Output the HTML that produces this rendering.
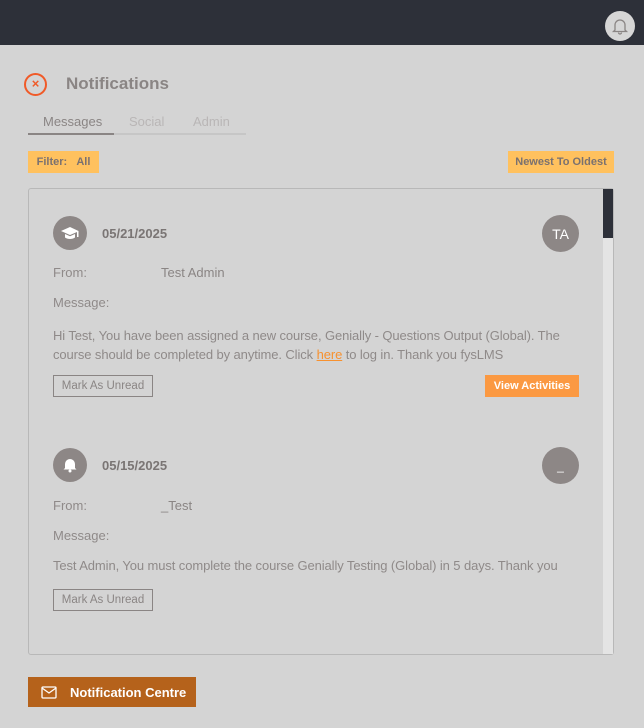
<!DOCTYPE html>
<html><head><meta charset="utf-8"><style>
*{margin:0;padding:0;box-sizing:border-box}
body{width:644px;height:728px;background:#d4d4d4;font-family:"Liberation Sans",sans-serif;position:relative;overflow:hidden;color:#8a8584}
.a{position:absolute;white-space:nowrap}
.hdr{left:0;top:0;width:644px;height:45px;background:#2d3039}
.circ{border-radius:50%;background:#8d8786;display:flex;align-items:center;justify-content:center;color:#fff}
.lbl{font-size:13px;color:#8f8a89}
.btn{border:1px solid #8a8584;font-size:11.5px;color:#8a8584;display:flex;align-items:center;justify-content:center}
.y{background:#ffc15e;font-size:11px;font-weight:bold;color:#7a7170;display:flex;align-items:center;justify-content:center}
</style></head><body>
<div class="a hdr"></div>
<div class="a circ" style="left:605px;top:11px;width:30px;height:30px;background:#d6d6d6">
<svg width="18" height="18" viewBox="0 0 18 18" fill="none" stroke="#8a8584" stroke-width="1.3"><path d="M4 13V8a5 5 0 0 1 10 0v5l1.5 1.5h-13z"/><path d="M7.5 15.5a1.5 1.5 0 0 0 3 0"/></svg></div>
<div class="a" style="left:24px;top:73px;width:23px;height:23px;border:2px solid #f05a28;border-radius:50%;color:#f05a28;font-size:13px;font-weight:bold;text-align:center;line-height:18px">×</div>
<div class="a" style="left:66px;top:74px;font-size:17px;font-weight:bold;color:#8a8584">Notifications</div>
<div class="a" style="left:43px;top:114px;font-size:13px;color:#8a8584">Messages</div>
<div class="a" style="left:129px;top:114px;font-size:13px;color:#b9b6b6">Social</div>
<div class="a" style="left:193px;top:114px;font-size:13px;color:#b9b6b6">Admin</div>
<div class="a" style="left:28px;top:133px;width:218px;height:2px;background:#c6c6c6"></div>
<div class="a" style="left:28px;top:133px;width:86px;height:2px;background:#8a8584"></div>
<div class="a y" style="left:28px;top:151px;width:71px;height:22px">Filter:&nbsp;&nbsp;&nbsp;All</div>
<div class="a y" style="left:508px;top:151px;width:106px;height:22px">Newest To Oldest</div>
<div class="a" style="left:28px;top:188px;width:586px;height:467px;border:1px solid #b8b8b8;border-radius:3px"></div>
<div class="a" style="left:603px;top:189px;width:10px;height:465px;background:#e4e4e4"></div>
<div class="a" style="left:603px;top:189px;width:10px;height:49px;background:#2d3039"></div>

<div class="a circ" style="left:53px;top:216px;width:34px;height:34px"><svg width="18" height="16" viewBox="0 0 18 16" fill="#fff"><path d="M9 2L0 6l9 4 7-3v5h1.5V6z"/><path d="M4 9v3.5c2.5 2 7.5 2 10 0V9l-5 2.2z"/></svg></div>
<div class="a" style="left:102px;top:226px;font-size:13px;font-weight:bold;color:#7a7574">05/21/2025</div>
<div class="a circ" style="left:542px;top:215px;width:37px;height:37px;font-size:14px">TA</div>
<div class="a lbl" style="left:53px;top:265px">From:</div>
<div class="a lbl" style="left:161px;top:265px;color:#8a8584">Test Admin</div>
<div class="a lbl" style="left:53px;top:295px">Message:</div>
<div class="a lbl" style="left:53px;top:326px;line-height:19px;letter-spacing:-0.1px">Hi Test, You have been assigned a new course, Genially - Questions Output (Global). The<br>course should be completed by anytime. Click <span style="color:#f7912f;text-decoration:underline">here</span> to log in. Thank you fysLMS</div>
<div class="a btn" style="left:53px;top:375px;width:100px;height:22px">Mark As Unread</div>
<div class="a" style="left:485px;top:375px;width:94px;height:22px;background:#fb9942;color:#fff;font-size:11px;font-weight:bold;display:flex;align-items:center;justify-content:center">View Activities</div>

<div class="a circ" style="left:53px;top:448px;width:34px;height:34px"><svg width="14" height="16" viewBox="0 0 14 16" fill="#fff"><path d="M2 11V7a5 5 0 0 1 10 0v4l1.5 1.5h-13z"/><circle cx="7" cy="14" r="1.5"/></svg></div>
<div class="a" style="left:102px;top:458px;font-size:13px;font-weight:bold;color:#7a7574">05/15/2025</div>
<div class="a circ" style="left:542px;top:447px;width:37px;height:37px;font-size:12px">_</div>
<div class="a lbl" style="left:53px;top:498px">From:</div>
<div class="a lbl" style="left:161px;top:498px;color:#8a8584">_Test</div>
<div class="a lbl" style="left:53px;top:528px">Message:</div>
<div class="a lbl" style="left:53px;top:558px;letter-spacing:-0.1px">Test Admin, You must complete the course Genially Testing (Global) in 5 days. Thank you</div>
<div class="a btn" style="left:53px;top:589px;width:100px;height:22px">Mark As Unread</div>

<div class="a" style="left:28px;top:677px;width:168px;height:30px;background:#b5621b;color:#fff;font-size:13px;font-weight:bold;display:flex;align-items:center;padding-left:13px">
<svg width="16" height="13" viewBox="0 0 16 13" fill="none" stroke="#fff" stroke-width="1.3" style="margin-right:13px"><rect x="1" y="1" width="14" height="11" rx="1"/><path d="M1 2l7 5 7-5"/></svg>Notification Centre</div>
</body></html>
